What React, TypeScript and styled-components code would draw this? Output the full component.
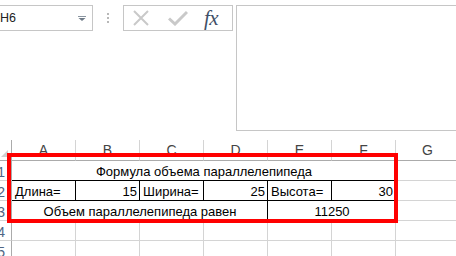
import React from "react";
import styled, { createGlobalStyle } from "styled-components";

const GlobalStyle = createGlobalStyle`
  html, body { margin: 0; padding: 0; background: #fff; }
  body {
    width: 456px;
    height: 256px;
    overflow: hidden;
    font-family: "Liberation Sans", Arial, sans-serif;
  }
`;

const Window = styled.div`
  position: relative;
  width: 456px;
  height: 256px;
  overflow: hidden;
  background: #fff;
`;

const FormulaBar = styled.div`
  display: flex;
  align-items: flex-start;
  box-sizing: border-box;
  height: 140px;
  padding-top: 5px;
`;

const NameBox = styled.div`
  box-sizing: border-box;
  margin-left: -8px;
  width: 101px;
  height: 26px;
  border: 1px solid #c6c6c6;
  display: flex;
  align-items: center;
  justify-content: space-between;
  padding: 0 6px 0 7px;
  font-size: 12.5px;
  color: #222;
`;

const Grip = styled.div`
  width: 30px;
  height: 26px;
  display: flex;
  flex-direction: column;
  align-items: center;
  justify-content: center;
  gap: 2px;
`;

const GripDot = styled.span`
  width: 2px;
  height: 2px;
  background: #b8b8b8;
`;

const FxButtons = styled.div`
  box-sizing: border-box;
  width: 110px;
  height: 26px;
  border: 1px solid #c6c6c6;
  display: flex;
  align-items: center;
  padding-left: 9px;
`;

const IconSlot = styled.span<{ $w: number }>`
  width: ${(p) => p.$w}px;
  display: flex;
  align-items: center;
`;

const FxLabel = styled.span`
  font-family: "Liberation Serif", "Times New Roman", serif;
  font-style: italic;
  font-size: 21px;
  line-height: 20px;
  color: #3f5068;
  letter-spacing: -0.5px;
`;

const FormulaInput = styled.div`
  box-sizing: border-box;
  flex: 1;
  margin-left: 3px;
  margin-right: -10px;
  height: 126px;
  border: 1px solid #c6c6c6;
`;

const Sheet = styled.div`
  margin-left: -13px;
  display: grid;
  grid-template-columns: 25px repeat(7, 64px);
  grid-template-rows: 21px repeat(5, 20px);
`;

const ColHead = styled.div`
  box-sizing: border-box;
  border-right: 1px solid #d4d4d4;
  border-bottom: 1px solid #ababab;
  display: flex;
  align-items: center;
  justify-content: center;
  font-size: 14px;
  color: #444;
`;

const Corner = styled.div`
  box-sizing: border-box;
  border-right: 1px solid #ababab;
  border-bottom: 1px solid #ababab;
  display: flex;
  align-items: flex-end;
  justify-content: flex-end;
  padding: 0 3px 3px 0;
`;

const RowHead = styled.div`
  box-sizing: border-box;
  border-right: 1px solid #ababab;
  border-bottom: 1px solid #d4d4d4;
  display: flex;
  align-items: center;
  justify-content: flex-end;
  padding: 2px 6px 0 0;
  font-size: 14px;
  color: #4f6584;
`;

const Cell = styled.div<{ $span?: number; $align?: "left" | "right" | "center"; $table?: boolean }>`
  box-sizing: border-box;
  grid-column: span ${(p) => p.$span ?? 1};
  border-right: 1px solid ${(p) => (p.$table ? "#000" : "#d4d4d4")};
  border-bottom: 1px solid ${(p) => (p.$table ? "#000" : "#d4d4d4")};
  display: flex;
  align-items: center;
  justify-content: ${(p) =>
    p.$align === "right" ? "flex-end" : p.$align === "center" ? "center" : "flex-start"};
  padding: 2px 2px 0 3px;
  font-size: 13px;
  color: #000;
  white-space: nowrap;
  overflow: hidden;
`;

const Highlight = styled.div`
  position: absolute;
  left: 7px;
  top: 153px;
  width: 391px;
  height: 70px;
  box-sizing: border-box;
  border: 4px solid #ff0000;
  pointer-events: none;
`;

const cols = ["A", "B", "C", "D", "E", "F", "G"];

const Caret = () => (
  <svg width="8" height="5" viewBox="0 0 8 5">
    <rect x="0" y="0" width="8" height="1" fill="#8a95a0" />
    <polygon points="0.5,2 7.5,2 4,5" fill="#6f7b88" />
  </svg>
);

const CancelIcon = () => (
  <svg width="16" height="16" viewBox="0 0 16 16">
    <path d="M1 1 L15 15 M15 1 L1 15" stroke="#c9c9c9" strokeWidth="2" fill="none" />
  </svg>
);

const EnterIcon = () => (
  <svg width="20" height="16" viewBox="0 0 20 16">
    <path d="M1 8.5 L7 14 L19 2" stroke="#c9c9c9" strokeWidth="3" fill="none" />
  </svg>
);

const SelectAll = () => (
  <svg width="7" height="7" viewBox="0 0 7 7">
    <polygon points="7,0 7,7 0,7" fill="#d0d0d0" />
  </svg>
);

export default function App() {
  return (
    <Window>
      <GlobalStyle />
      <FormulaBar>
        <NameBox>
          <span>H6</span>
          <Caret />
        </NameBox>
        <Grip>
          <GripDot />
          <GripDot />
          <GripDot />
        </Grip>
        <FxButtons>
          <IconSlot $w={35}>
            <CancelIcon />
          </IconSlot>
          <IconSlot $w={36}>
            <EnterIcon />
          </IconSlot>
          <FxLabel>fx</FxLabel>
        </FxButtons>
        <FormulaInput />
      </FormulaBar>
      <Sheet>
        <Corner>
          <SelectAll />
        </Corner>
        {cols.map((c) => (
          <ColHead key={c}>{c}</ColHead>
        ))}

        <RowHead>1</RowHead>
        <Cell $span={6} $align="center" $table>
          Формула объема параллелепипеда
        </Cell>
        <Cell />

        <RowHead>2</RowHead>
        <Cell $table>Длина=</Cell>
        <Cell $table $align="right">15</Cell>
        <Cell $table>Ширина=</Cell>
        <Cell $table $align="right">25</Cell>
        <Cell $table>Высота=</Cell>
        <Cell $table $align="right">30</Cell>
        <Cell />

        <RowHead>3</RowHead>
        <Cell $span={4} $align="center" $table>
          Объем параллелепипеда равен
        </Cell>
        <Cell $span={2} $align="center" $table>
          11250
        </Cell>
        <Cell />

        {[4, 5].map((r) => (
          <React.Fragment key={r}>
            <RowHead>{r}</RowHead>
            {cols.map((c) => (
              <Cell key={c} />
            ))}
          </React.Fragment>
        ))}
      </Sheet>
      <Highlight />
    </Window>
  );
}
